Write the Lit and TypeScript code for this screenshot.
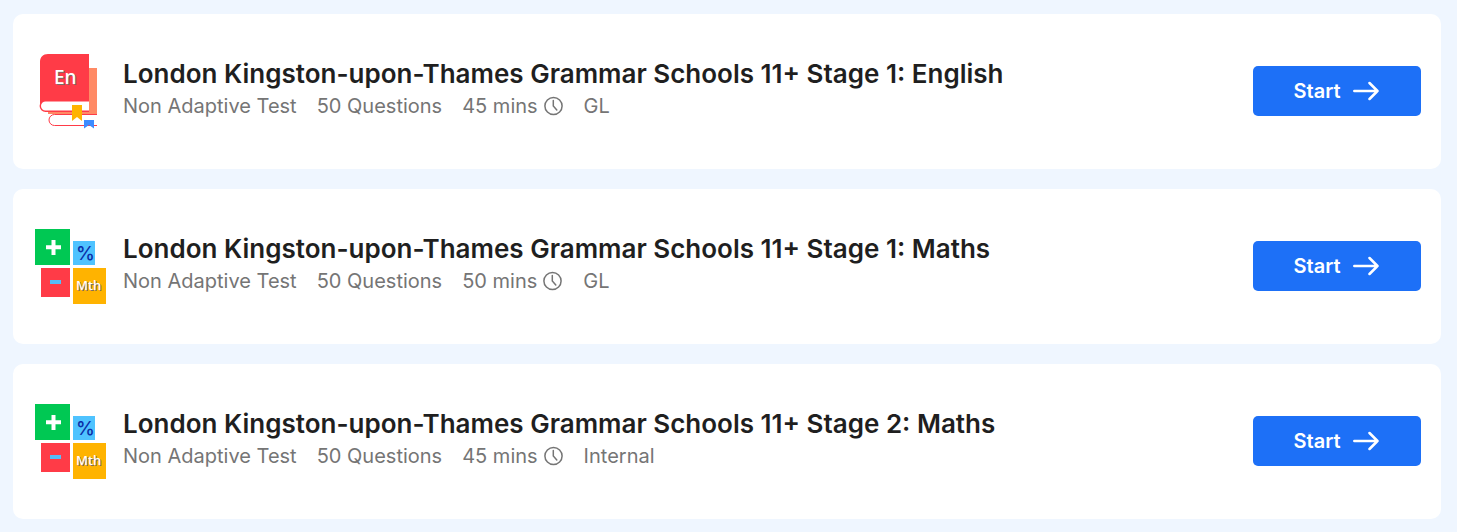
import { LitElement, html, css, svg } from "lit";
import { customElement, property } from "lit/decorators.js";

interface Test {
  subject: "english" | "maths";
  title: string;
  kind: string;
  questions: number;
  minutes: number;
  board: string;
}

const tests: Test[] = [
  { subject: "english", title: "London Kingston-upon-Thames Grammar Schools 11+ Stage 1: English", kind: "Non Adaptive Test", questions: 50, minutes: 45, board: "GL" },
  { subject: "maths", title: "London Kingston-upon-Thames Grammar Schools 11+ Stage 1: Maths", kind: "Non Adaptive Test", questions: 50, minutes: 50, board: "GL" },
  { subject: "maths", title: "London Kingston-upon-Thames Grammar Schools 11+ Stage 2: Maths", kind: "Non Adaptive Test", questions: 50, minutes: 45, board: "Internal" },
];

const englishArt = svg`
  <path d="M54 14h8v46H13v-7h41z" fill="#ff8a65"/>
  <path d="M62 60.500H19.500a5.300 5.300 0 0 0 0 11H62" fill="#fff" stroke="#ff3b47"/>
  <path d="M13 0h41v48H11c-3 0-6 2-6 5V8c0-5 3-8 8-8z" fill="#ff3b47"/>
  <path d="M54 46.800H10.500a5 5 0 0 0 0 10.400H54z" fill="#fff"/>
  <path d="M54 46.800H10.500a5 5 0 0 0 0 10.400H54" fill="none" stroke="#ff3b47" stroke-width="1.400"/>
  <path d="M37 51h10v16l-5-4-5 4z" fill="#ffb300"/>
  <path d="M49 66h10v8.500l-5-3.500-5 3.500z" fill="#3d8bff"/>
  <text class="shade" x="20" y="31" font-size="19">En</text>
  <text class="face" x="19" y="30" font-size="19">En</text>`;

const mathsArt = svg`
  <path d="M0 0h35v36H0z" fill="#00c853"/>
  <path d="M11 18.300h15M18.500 11v15" fill="none" stroke="#fff" stroke-width="4"/>
  <path d="M38 12h22v24H38z" fill="#4fc3ff"/>
  <text class="percent" x="41" y="31" font-size="19">%</text>
  <path d="M6 39h29v29H6z" fill="#ff3b47"/>
  <path d="M15 51h11v4H15z" fill="#56bdf8"/>
  <path d="M38 39h33v36H38z" fill="#ffb300"/>
  <text class="shade" x="42" y="62" font-size="13">Mth</text>
  <text class="face" x="41" y="61" font-size="13">Mth</text>`;

@customElement("test-card")
class TestCard extends LitElement {
  @property({ attribute: false }) test!: Test;

  static styles = css`
    :host { display: block; }
    .card {
      display: flex;
      align-items: center;
      gap: 16px;
      padding: 40px 20px 40px 22px;
      background: #fff;
      border-radius: 10px;
    }
    .art { display: block; flex: none; width: 72px; height: 75px; font-family: "Noto Sans", sans-serif; font-weight: 500; }
    .shade { fill: #7a6a66; }
    .face { fill: #fff; }
    .percent { fill: #0b2fa8; font-family: Inter, sans-serif; font-weight: 500; }
    .info { flex: 1; min-width: 0; padding-bottom: 3px; }
    .title { margin: 0; font-size: 26px; line-height: 32px; font-weight: 600; color: #1f1f1f; }
    .meta {
      display: flex;
      flex-wrap: wrap;
      column-gap: 20px;
      margin: 0;
      padding: 0;
      list-style: none;
      font-size: 20px;
      line-height: 32px;
      color: #757575;
    }
    .time { display: flex; align-items: center; gap: 6px; }
    .clock { width: 20px; height: 20px; }
    .start {
      display: flex;
      flex: none;
      align-items: center;
      justify-content: center;
      gap: 12px;
      width: 168px;
      height: 50px;
      margin-bottom: 2px;
      padding: 0 2px 0 0;
      border: 0;
      border-radius: 5px;
      background: #1d70f7;
      color: #fff;
      font: 600 20px/24px Inter, sans-serif;
      cursor: pointer;
    }
    .arrow { width: 26px; height: 20px; }
  `;

  render() {
    const t = this.test;
    return html`
      <article class="card">
        <svg class="art" viewBox="0 0 72 75" aria-hidden="true">${t.subject === "english" ? englishArt : mathsArt}</svg>
        <div class="info">
          <h2 class="title">${t.title}</h2>
          <ul class="meta">
            <li>${t.kind}</li>
            <li>${t.questions} Questions</li>
            <li class="time">${t.minutes} mins
              <svg class="clock" viewBox="0 0 20 20" fill="none" stroke="currentColor" stroke-width="1.500" stroke-linecap="round" aria-hidden="true">
                <circle cx="9.500" cy="10" r="8.600"/><path d="M9.300 4.500V10l3.500 4"/>
              </svg>
            </li>
            <li>${t.board}</li>
          </ul>
        </div>
        <button class="start" type="button">Start
          <svg class="arrow" viewBox="0 0 26 20" fill="none" stroke="currentColor" stroke-width="2.500" stroke-linecap="round" stroke-linejoin="round" aria-hidden="true">
            <path d="M1.300 10H24.500M16.500 2l8 8-8 8"/>
          </svg>
        </button>
      </article>`;
  }
}

@customElement("app-root")
class AppRoot extends LitElement {
  static styles = css`
    :host {
      display: block;
      box-sizing: border-box;
      min-height: 100vh;
      padding: 14px 16px 13px 13px;
      background: #eff6ff;
      font-family: Inter, sans-serif;
    }
    .list { display: grid; gap: 20px; }
  `;

  render() {
    return html`<main class="list">${tests.map((t) => html`<test-card .test=${t}></test-card>`)}</main>`;
  }
}
